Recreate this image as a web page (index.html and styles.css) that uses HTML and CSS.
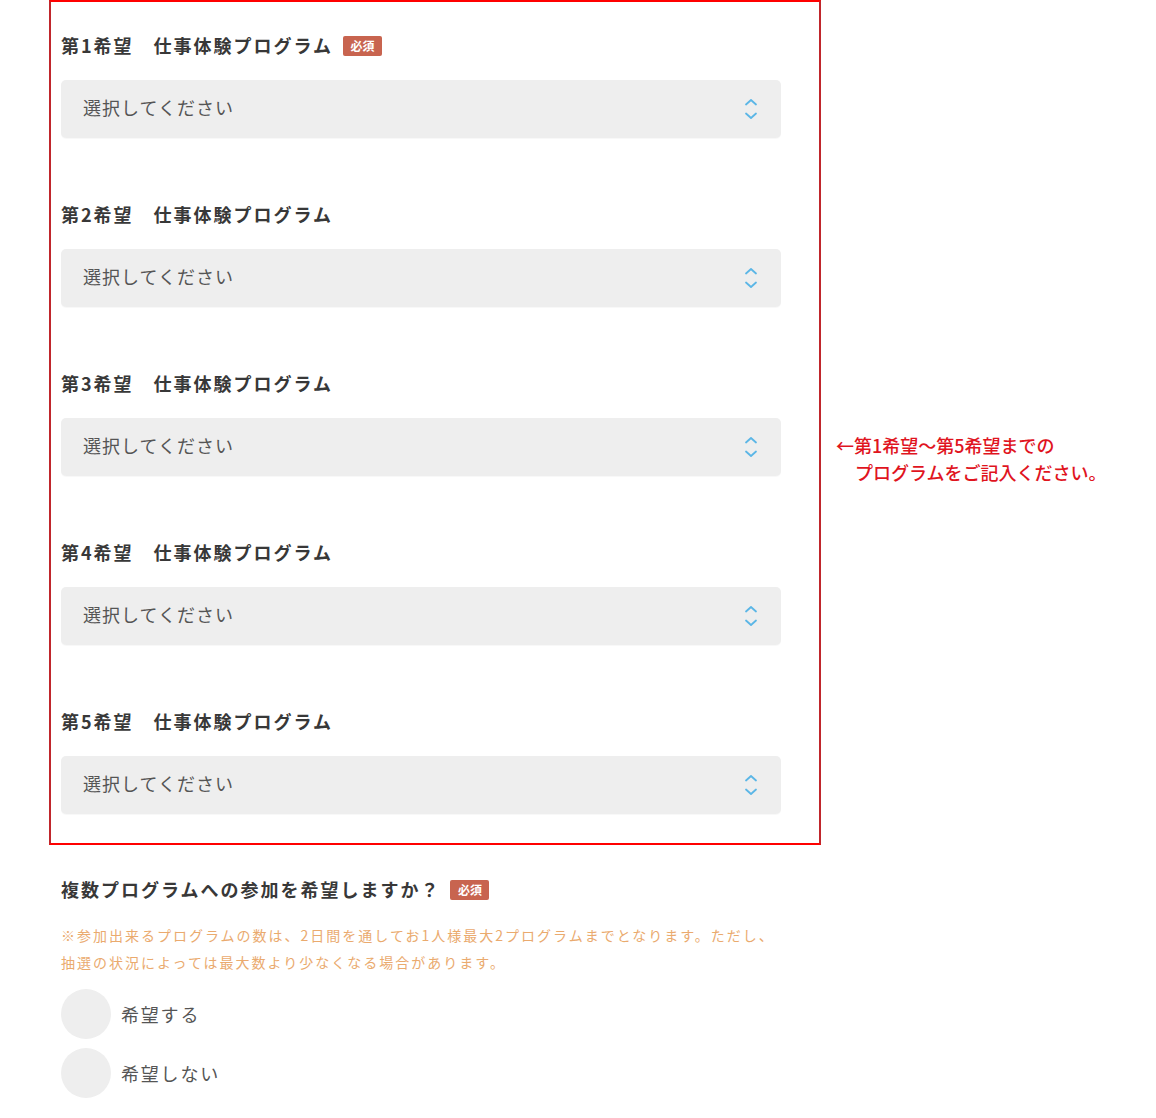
FILE: index.html
```html
<!DOCTYPE html>
<html lang="ja">
<head>
<meta charset="utf-8">
<title>仕事体験プログラム</title>
<link rel="stylesheet" href="styles.css">
</head>
<body>
<div class="page">
  <div class="top-row">
    <div class="choice-box">
      <div class="field">
        <div class="label">第1希望　仕事体験プログラム<span class="badge">必須</span></div>
        <div class="select"><span class="placeholder">選択してください</span>
          <svg class="chev" width="14" height="26" viewBox="0 0 14 26"><path d="M2 8.5 L7 4 L12 8.5 M2 17.5 L7 22 L12 17.5" fill="none" stroke="#5bb6e6" stroke-width="1.8" stroke-linecap="round" stroke-linejoin="round"/></svg>
        </div>
      </div>
      <div class="field">
        <div class="label">第2希望　仕事体験プログラム</div>
        <div class="select"><span class="placeholder">選択してください</span>
          <svg class="chev" width="14" height="26" viewBox="0 0 14 26"><path d="M2 8.5 L7 4 L12 8.5 M2 17.5 L7 22 L12 17.5" fill="none" stroke="#5bb6e6" stroke-width="1.8" stroke-linecap="round" stroke-linejoin="round"/></svg>
        </div>
      </div>
      <div class="field">
        <div class="label">第3希望　仕事体験プログラム</div>
        <div class="select"><span class="placeholder">選択してください</span>
          <svg class="chev" width="14" height="26" viewBox="0 0 14 26"><path d="M2 8.5 L7 4 L12 8.5 M2 17.5 L7 22 L12 17.5" fill="none" stroke="#5bb6e6" stroke-width="1.8" stroke-linecap="round" stroke-linejoin="round"/></svg>
        </div>
      </div>
      <div class="field">
        <div class="label">第4希望　仕事体験プログラム</div>
        <div class="select"><span class="placeholder">選択してください</span>
          <svg class="chev" width="14" height="26" viewBox="0 0 14 26"><path d="M2 8.5 L7 4 L12 8.5 M2 17.5 L7 22 L12 17.5" fill="none" stroke="#5bb6e6" stroke-width="1.8" stroke-linecap="round" stroke-linejoin="round"/></svg>
        </div>
      </div>
      <div class="field">
        <div class="label">第5希望　仕事体験プログラム</div>
        <div class="select"><span class="placeholder">選択してください</span>
          <svg class="chev" width="14" height="26" viewBox="0 0 14 26"><path d="M2 8.5 L7 4 L12 8.5 M2 17.5 L7 22 L12 17.5" fill="none" stroke="#5bb6e6" stroke-width="1.8" stroke-linecap="round" stroke-linejoin="round"/></svg>
        </div>
      </div>
    </div>
    <div class="annotation">
      <span class="ann-line">←第1希望〜第5希望までの</span>
      <span class="ann-line ann-indent">プログラムをご記入ください。</span>
    </div>
  </div>

  <div class="question">
    <div class="label">複数プログラムへの参加を希望しますか？<span class="badge">必須</span></div>
    <p class="note">※参加出来るプログラムの数は、2日間を通してお1人様最大2プログラムまでとなります。ただし、<br>抽選の状況によっては最大数より少なくなる場合があります。</p>
    <div class="radios">
      <label class="radio"><span class="circle"></span><span class="radio-text">希望する</span></label>
      <label class="radio"><span class="circle"></span><span class="radio-text">希望しない</span></label>
    </div>
  </div>
</div>
</body>
</html>
```

FILE: styles.css
```css
* { box-sizing: border-box; }
html, body { margin: 0; padding: 0; background: #fff; }
body {
  font-family: "Noto Sans CJK JP", "Noto Sans", sans-serif;
  color: #333;
}
.page {
  padding-left: 49px;
}
.top-row {
  display: flex;
  align-items: flex-start;
}
.choice-box {
  width: 772px;
  border-top: 2px solid #ff0000;
  border-bottom: 2px solid #ff0000;
  border-left: 2px solid #c0262c;
  border-right: 2px solid #c0262c;
  padding: 32px 38px 29px 10px;
  display: flex;
  flex-direction: column;
  gap: 65px;
}
.label {
  font-size: 18px;
  line-height: 23px;
  font-weight: 700;
  letter-spacing: 2px;
  color: #383838;
  display: flex;
  align-items: center;
}
.badge {
  display: inline-block;
  margin-left: 10px;
  width: 39px;
  height: 20px;
  line-height: 20px;
  text-align: center;
  background: #c8644f;
  color: #fff;
  font-size: 12px;
  font-weight: 700;
  letter-spacing: 0;
  border-radius: 2px;
}
.field .label { margin-bottom: 23px; }
.select {
  height: 58px;
  background: #eeeeee;
  border-radius: 5px;
  box-shadow: 0 1px 1px rgba(0,0,0,0.03);
  display: flex;
  align-items: center;
  justify-content: space-between;
  padding: 0 23px 4px 22px;
}
.placeholder {
  font-size: 18px;
  letter-spacing: 1px;
  color: #555;
}
.chev { display: block; margin-top: 4px; }
.annotation {
  align-self: center;
  margin-top: 72px;
  margin-left: 15px;
  color: #e0141e;
  font-size: 18px;
  font-weight: 500;
  line-height: 27px;
  display: flex;
  flex-direction: column;
}
.ann-indent { padding-left: 19px; }
.question {
  padding-left: 12px;
  margin-top: 33px;
}
.note {
  margin: 21px 0 0;
  font-size: 14px;
  line-height: 27px;
  letter-spacing: 2px;
  color: #eaaa6e;
}
.radios {
  margin-top: 13px;
  display: flex;
  flex-direction: column;
  gap: 9px;
}
.radio {
  display: flex;
  align-items: center;
  gap: 10px;
}
.circle {
  width: 50px;
  height: 50px;
  border-radius: 50%;
  background: #eeeeee;
}
.radio-text {
  font-size: 18px;
  letter-spacing: 1.8px;
  color: #555;
}
```
